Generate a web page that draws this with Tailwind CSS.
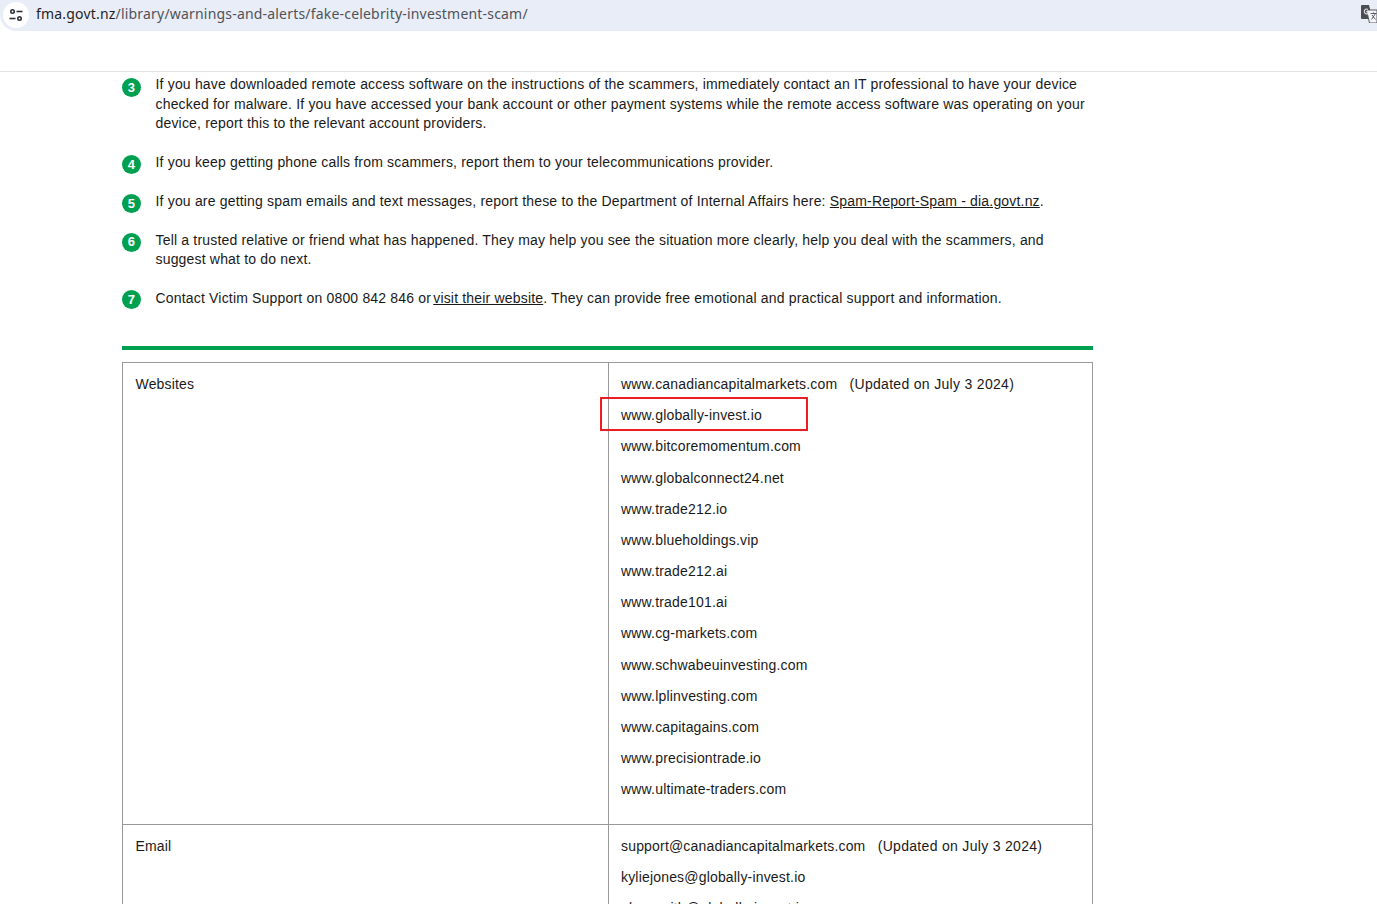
<!DOCTYPE html>
<html lang="en">
<head>
    <meta charset="UTF-8">
    <title>Fake celebrity investment scam</title>
    <script src="https://cdn.jsdelivr.net/npm/@tailwindcss/browser@4"></script>
</head>
<body class="h-[904px] overflow-hidden bg-white font-['Liberation_Sans',Arial,sans-serif] text-[14px] leading-[19.6px] tracking-[0.18px] text-[#1a1a1a]">
    <!-- browser bar -->
    <header class="h-[72px] border-b border-[#e3e3e3]">
        <div class="relative flex h-[31px] items-center rounded-bl-[16px] bg-[#e9edf7]">
            <div class="ml-[3px] flex h-[26px] w-[26px] -translate-y-[1px] items-center justify-center rounded-full bg-white">
                <svg width="16" height="14" viewBox="0 0 16 14" fill="none" stroke="#2b2f36" stroke-width="1.6">
                    <circle cx="4.5" cy="3.5" r="1.7"/><path d="M8.5 3.5h6"/>
                    <circle cx="11.5" cy="10.5" r="1.7"/><path d="M1.5 10.5h6"/>
                </svg>
            </div>
            <div class="ml-[7px] -translate-y-[2px] font-['Noto_Sans',sans-serif] text-[14px] tracking-[0.19px] text-[#4f5359]"><span class="text-[#1f1f1f]">fma.govt.nz</span>/library/warnings-and-alerts/fake-celebrity-investment-scam/</div>
            <svg class="absolute right-0 top-[5px]" width="16" height="18" viewBox="0 0 16 18">
                <path d="M0 1q0-1 1-1h7l3.500 14H1q-1 0-1-1z" fill="#4a4d52"/>
                <path d="M5.500 5H16v13H8.500z" fill="#f4f5f8" stroke="#4a4d52" stroke-width=".9"/>
                <path d="M7 4.500A2.400 2.400 0 1 0 7 8.500V6.800H5" fill="none" stroke="#e4e6ea" stroke-width="1.100"/>
                <path d="M9.500 8.500h6M12.500 7.500v1M10.500 14.500l4-6M11 10l3.500 4.500" fill="none" stroke="#4a4d52" stroke-width=".9"/>
            </svg>
        </div>
    </header>

    <main class="ml-[122px] w-[971px]">
        <ol class="flex flex-col gap-[19.2px] pt-[3.2px]">
            <li class="flex">
                <span class="mb-[-5px] mt-[3px] flex h-[19px] w-[19px] shrink-0 items-center justify-center rounded-full bg-[#00a051] text-[13px] font-bold text-white">3</span>
                <p class="ml-[14.5px]">If you have downloaded remote access software on the instructions of the scammers, immediately contact an IT professional to have your device checked for malware. If you have accessed your bank account or other payment systems while the remote access software was operating on your device, report this to the relevant account providers.</p>
            </li>
            <li class="flex">
                <span class="mb-[-5px] mt-[2px] flex h-[19px] w-[19px] shrink-0 items-center justify-center rounded-full bg-[#00a051] text-[13px] font-bold text-white">4</span>
                <p class="ml-[14.5px]">If you keep getting phone calls from scammers, report them to your telecommunications provider.</p>
            </li>
            <li class="flex">
                <span class="mb-[-5px] mt-[2px] flex h-[19px] w-[19px] shrink-0 items-center justify-center rounded-full bg-[#00a051] text-[13px] font-bold text-white">5</span>
                <p class="ml-[14.5px]">If you are getting spam emails and text messages, report these to the Department of Internal Affairs here: <a class="underline">Spam-Report-Spam - dia.govt.nz</a>.</p>
            </li>
            <li class="flex">
                <span class="mb-[-5px] mt-[2px] flex h-[19px] w-[19px] shrink-0 items-center justify-center rounded-full bg-[#00a051] text-[13px] font-bold text-white">6</span>
                <p class="ml-[14.5px]">Tell a trusted relative or friend what has happened. They may help you see the situation more clearly, help you deal with the scammers, and suggest what to do next.</p>
            </li>
            <li class="flex">
                <span class="mb-[-5px] mt-[1px] flex h-[19px] w-[19px] shrink-0 items-center justify-center rounded-full bg-[#00a051] text-[13px] font-bold text-white">7</span>
                <p class="ml-[14.5px]">Contact Victim Support on 0800 842 846 or <a class="-ml-[2px] underline">visit their website</a>. They can provide free emotional and practical support and information.</p>
            </li>
        </ol>

        <div class="mt-[37.5px] h-[4px] bg-[#00a051]"></div>

        <!-- scam details table -->
        <div class="mt-[11.8px] grid grid-cols-[486px_1fr] border-l border-r border-t border-[#999]">
            <div class="border-b border-r border-[#999] px-[12.5px] pt-[12px]">Websites</div>
            <div class="relative flex flex-col gap-[11.6px] border-b border-[#999] pb-[24px] pl-[12px] pt-[12px]">
                <p>www.canadiancapitalmarkets.com &nbsp; <span class="tracking-[0.31px]">(Updated on July 3 2024)</span></p>
                <p>www.globally-invest.io</p>
                <p>www.bitcoremomentum.com</p>
                <p>www.globalconnect24.net</p>
                <p>www.trade212.io</p>
                <p>www.blueholdings.vip</p>
                <p>www.trade212.ai</p>
                <p>www.trade101.ai</p>
                <p>www.cg-markets.com</p>
                <p>www.schwabeuinvesting.com</p>
                <p>www.lplinvesting.com</p>
                <p>www.capitagains.com</p>
                <p>www.precisiontrade.io</p>
                <p>www.ultimate-traders.com</p>
                <div class="absolute left-[-9px] top-[34px] h-[34px] w-[208px] border-2 border-[#ee1c25]"></div>
            </div>
            <div class="border-r border-[#999] px-[12.5px] pt-[12px]">Email</div>
            <div class="flex flex-col gap-[11.6px] pl-[12px] pt-[12px]">
                <p>support@canadiancapitalmarkets.com &nbsp; <span class="tracking-[0.31px]">(Updated on July 3 2024)</span></p>
                <p>kyliejones@globally-invest.io</p>
                <p>alex.smith@globally-invest.io</p>
            </div>
        </div>
    </main>
</body>
</html>
